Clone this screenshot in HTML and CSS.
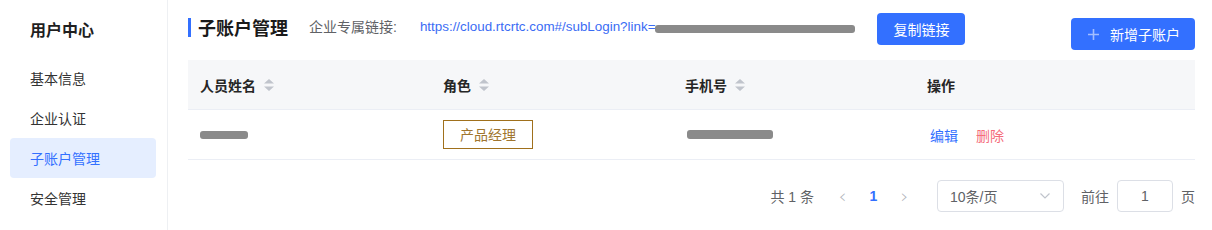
FILE: index.html
```html
<!DOCTYPE html>
<html lang="zh-CN">
<head>
<meta charset="utf-8">
<title>子账户管理</title>
<link rel="stylesheet" href="styles.css">
</head>
<body>
<div class="page">
  <aside class="sidebar">
    <div class="side-title">用户中心</div>
    <div class="menu-item">基本信息</div>
    <div class="menu-item">企业认证</div>
    <div class="menu-item active">子账户管理</div>
    <div class="menu-item">安全管理</div>
  </aside>
  <main class="main">
    <div class="toolbar">
      <div class="title"><span class="title-bar"></span>子账户管理</div>
      <div class="link-label">企业专属链接:</div>
      <div class="link">https://cloud.rtcrtc.com#/subLogin?link=<span class="redact link-redact"></span></div>
      <button class="btn copy-btn">复制链接</button>
      <button class="btn add-btn"><svg class="plus" width="11" height="11" viewBox="0 0 11 11"><path d="M5.5 0v11M0 5.5h11" stroke="currentColor" stroke-width="1.6"/></svg>新增子账户</button>
    </div>
    <div class="table">
      <div class="thead">
        <div class="th">人员姓名<svg class="sort" width="10" height="12" viewBox="0 0 10 12"><path d="M5 0L10 4.5H0z M5 12L0 7.5H10z" fill="#c0c4cc"/></svg></div>
        <div class="th">角色<svg class="sort" width="10" height="12" viewBox="0 0 10 12"><path d="M5 0L10 4.5H0z M5 12L0 7.5H10z" fill="#c0c4cc"/></svg></div>
        <div class="th">手机号<svg class="sort" width="10" height="12" viewBox="0 0 10 12"><path d="M5 0L10 4.5H0z M5 12L0 7.5H10z" fill="#c0c4cc"/></svg></div>
        <div class="th">操作</div>
      </div>
      <div class="trow">
        <div class="td"><span class="redact name-redact"></span></div>
        <div class="td"><span class="tag">产品经理</span></div>
        <div class="td"><span class="redact phone-redact"></span></div>
        <div class="td"><a class="op edit">编辑</a><a class="op del">删除</a></div>
      </div>
    </div>
    <div class="pager">
      <span class="total">共 1 条</span>
      <span class="pbtn arrow">&lsaquo;</span>
      <span class="pbtn num">1</span>
      <span class="pbtn arrow">&rsaquo;</span>
      <div class="select">10条/页<svg class="chev" width="10" height="6" viewBox="0 0 10 6"><path d="M0.5 0.5L5 5L9.5 0.5" fill="none" stroke="#c0c4cc" stroke-width="1.2"/></svg></div>
      <span class="goto">前往</span>
      <div class="jump">1</div>
      <span class="goto-end">页</span>
    </div>
  </main>
</div>
</body>
</html>
```

FILE: styles.css
```css
* { box-sizing: border-box; }
body {
  margin: 0;
  background: #fff;
  font-family: "Liberation Sans", "Noto Sans CJK SC", sans-serif;
  font-size: 14px;
  color: #333;
}
.page { display: flex; height: 230px; }
.sidebar {
  width: 168px;
  flex: none;
  border-right: 1px solid #eef0f3;
}
.side-title {
  height: 58px;
  display: flex;
  align-items: center;
  padding-left: 30px;
  font-size: 16px;
  font-weight: bold;
  color: #1f1f1f;
}
.menu-item {
  height: 40px;
  margin: 0 11px 0 10px;
  padding-left: 20px;
  display: flex;
  align-items: center;
  border-radius: 4px;
  color: #333;
}
.menu-item.active { background: #e5eeff; color: #3370ff; }
.main { flex: 1; padding: 0 17px 0 20px; }
.toolbar { display: flex; align-items: flex-start; height: 60px; }
.title {
  display: flex;
  align-items: center;
  margin-top: 17px;
  height: 20px;
  font-size: 18px;
  font-weight: bold;
  color: #1a1a1a;
  white-space: nowrap;
}
.title-bar { width: 3px; height: 19px; background: #3370ff; margin-right: 7px; }
.link-label { margin-left: 21px; margin-top: 17px; line-height: 20px; color: #606266; white-space: nowrap; }
.link { margin-left: 23px; margin-top: 17px; line-height: 20px; font-size: 13.4px; color: #3a6cf4; display: flex; align-items: center; white-space: nowrap; }
.redact { display: inline-block; background: #8a8a8a; border-radius: 3px; filter: blur(0.6px); }
.link-redact { width: 200px; height: 8px; margin-top: 3px; }
.btn {
  border: none;
  background: #3370ff;
  color: #fff;
  font-family: inherit;
  font-size: 14px;
  height: 32px;
  border-radius: 4px;
  display: flex;
  align-items: center;
  white-space: nowrap;
  flex: none;
}
.copy-btn { margin-left: 22px; margin-top: 13px; padding: 0; width: 88px; justify-content: center; }
.add-btn { margin-left: auto; margin-top: 18px; padding: 0 0 0 17px; width: 124px; }
.plus { color: rgba(255,255,255,0.55); margin-right: 11px; flex: none; }
.table { width: 1007px; }
.thead, .trow {
  display: grid;
  grid-template-columns: 243px 242px 242px 1fr;
  border-bottom: 1px solid #ebeef5;
}
.thead { height: 50px; background: #f6f7f9; }
.trow { height: 50px; }
.th, .td { display: flex; align-items: center; padding-left: 12px; }
.th { font-weight: bold; color: #262626; }
.sort { margin-left: 8px; }
.name-redact { width: 48px; height: 8px; margin-left: 0; }
.phone-redact { width: 86px; height: 9px; margin-left: 2px; }
.tag {
  display: inline-flex;
  align-items: center;
  justify-content: center;
  width: 90px;
  height: 29px;
  border: 1px solid #a0701c;
  color: #a0752e;
  margin-top: -1px;
}
.op { margin-left: 3px; cursor: pointer; }
.edit { color: #3370ff; }
.del { color: #f56c7b; margin-left: 18px; }
.pager {
  display: flex;
  justify-content: flex-end;
  align-items: center;
  margin-top: 20px;
  height: 32px;
  color: #606266;
}
.total { margin-right: 13px; }
.pbtn { width: 31px; text-align: center; line-height: 32px; }
.arrow { font-size: 20px; color: #b0b3b9; font-family: "DejaVu Sans", sans-serif; font-weight: 200; }
.num { color: #3370ff; font-weight: bold; font-size: 14px; }
.select {
  margin-left: 17px;
  width: 127px;
  height: 32px;
  border: 1px solid #dcdfe6;
  border-radius: 4px;
  padding-left: 12px;
  display: flex;
  align-items: center;
  justify-content: space-between;
  padding-right: 13px;
}
.goto { margin-left: 17px; }
.jump {
  margin-left: 8px;
  width: 56px;
  height: 32px;
  border: 1px solid #dcdfe6;
  border-radius: 4px;
  display: flex;
  align-items: center;
  justify-content: center;
}
.goto-end { margin-left: 8px; }
```
